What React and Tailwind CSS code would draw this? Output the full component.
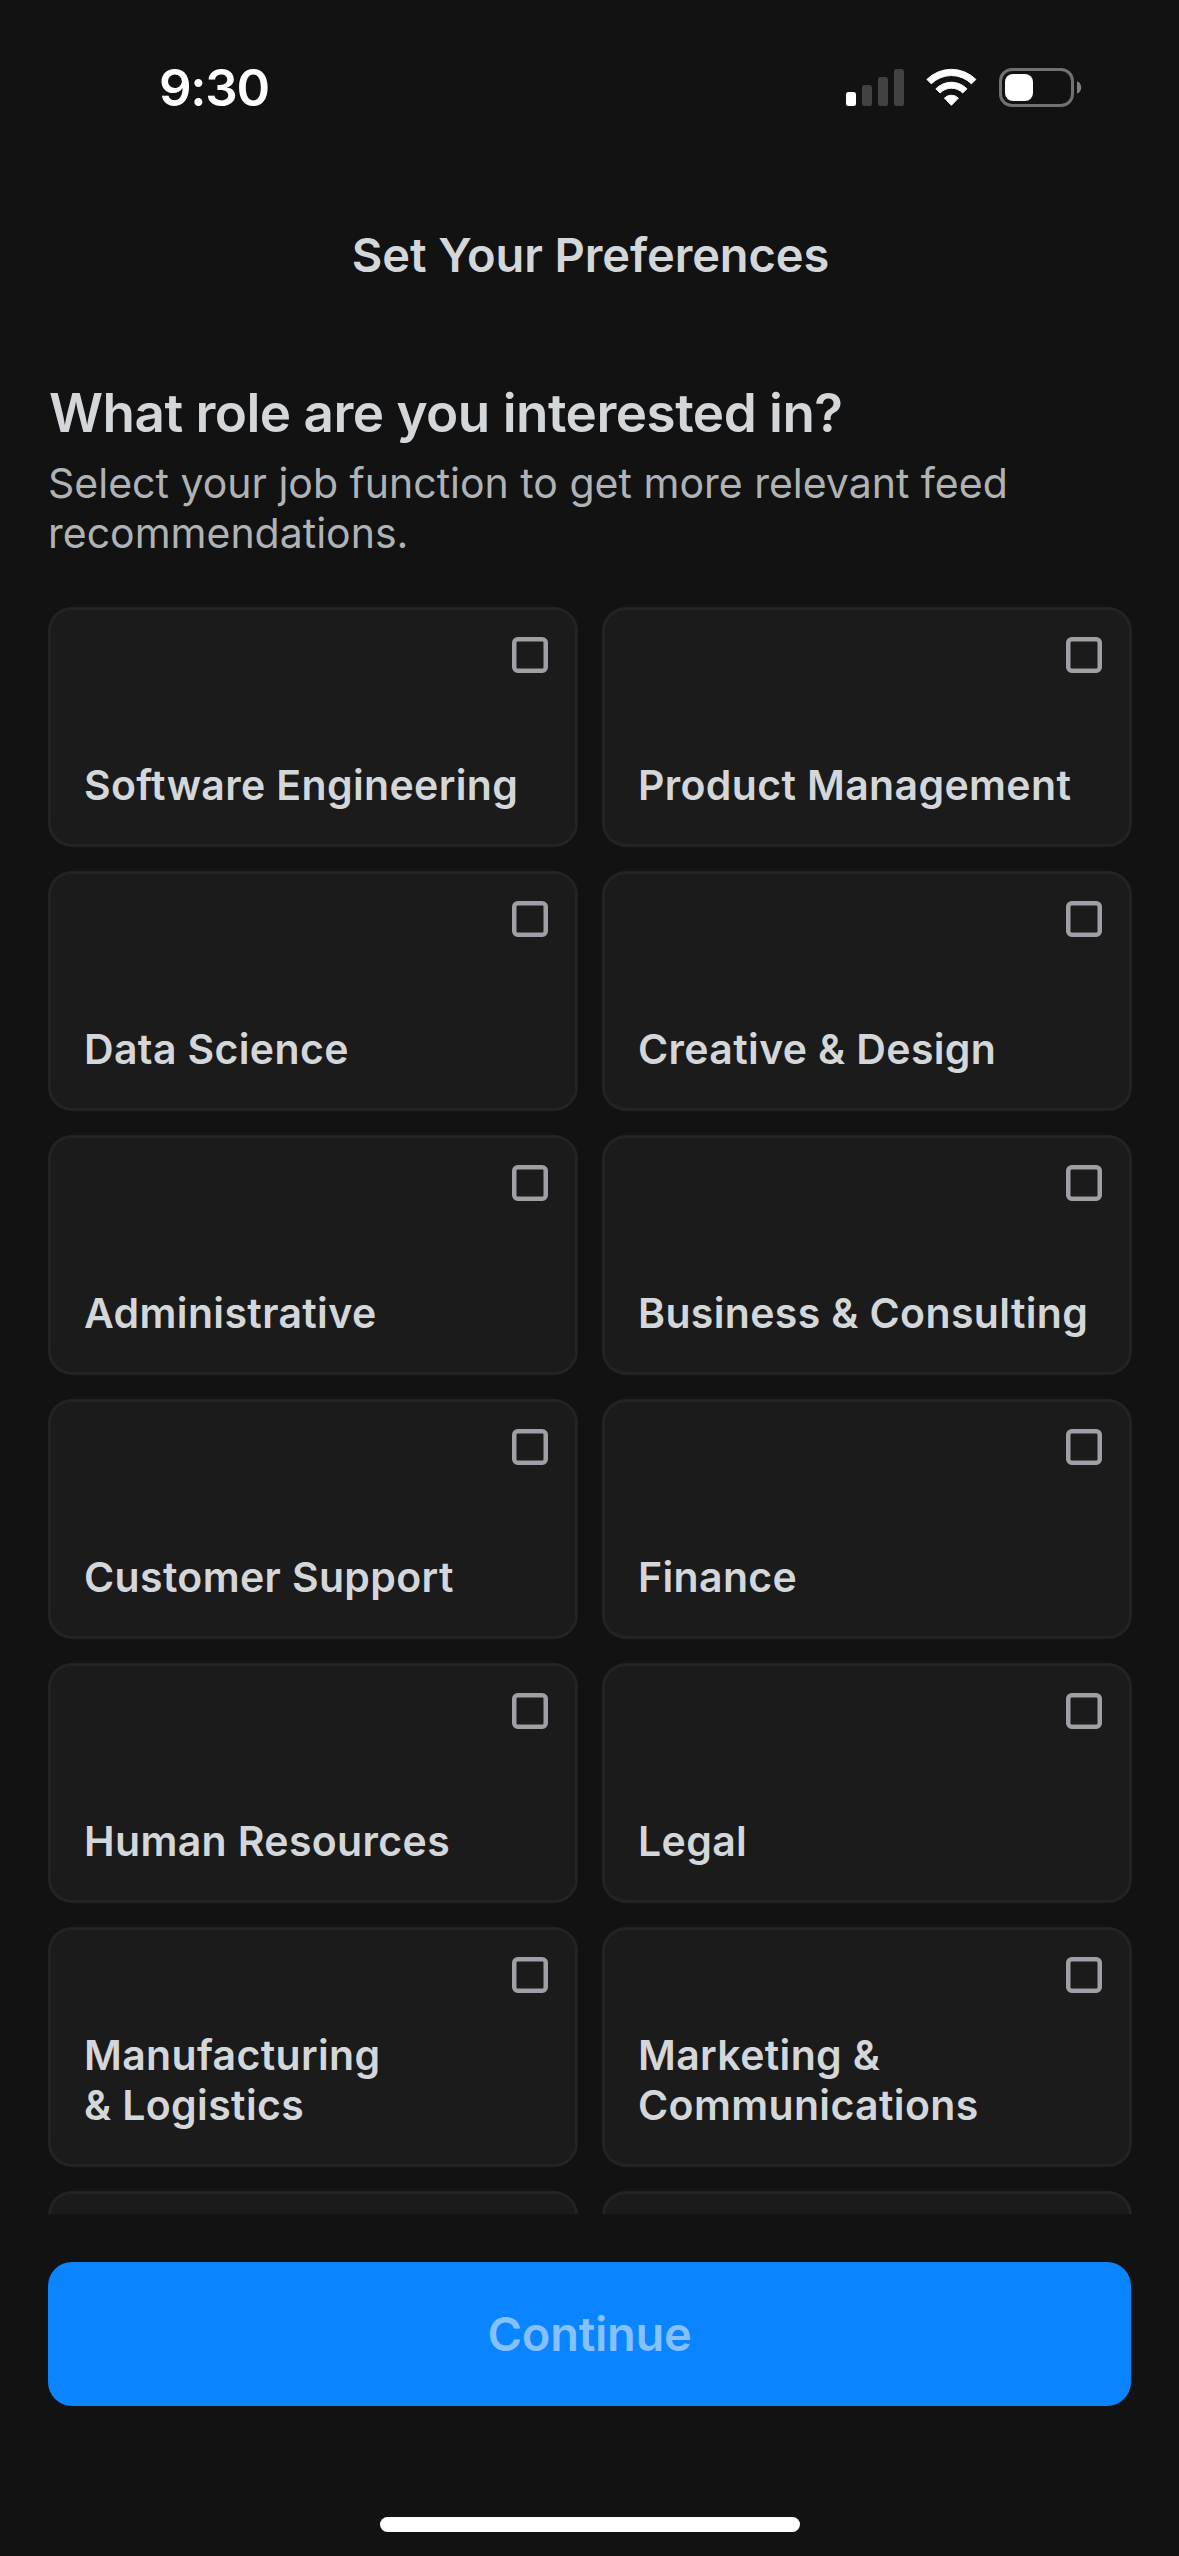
import { useState } from "react";

// Job functions, in the order of the grid
const ROLES = [
  "Software Engineering",
  "Product Management",
  "Data Science",
  "Creative & Design",
  "Administrative",
  "Business & Consulting",
  "Customer Support",
  "Finance",
  "Human Resources",
  "Legal",
  "Manufacturing\n& Logistics",
  "Marketing &\nCommunications",
  "",
  "",
];

const SignalIcon = () => (
  <svg width="58" height="39" viewBox="0 0 58 39">
    <rect x="0" y="24" width="10" height="14" rx="2.5" fill="#fff" />
    <rect x="16" y="17" width="10" height="21" rx="2.5" fill="#424242" />
    <rect x="32" y="9" width="10" height="29" rx="2.5" fill="#424242" />
    <rect x="48" y="1" width="10" height="37" rx="2.5" fill="#424242" />
  </svg>
);

const WifiIcon = () => (
  <svg
    width="51"
    height="39"
    viewBox="0 0 51 39"
    fill="#fff"
    stroke="#fff"
    strokeWidth="1"
    strokeLinejoin="round"
  >
    <path d="M0.9 11.4A34.8 34.8 0 0 1 49.9 11.4L45.5 15.8A28.6 28.6 0 0 0 5.3 15.8Z" />
    <path d="M9.9 20.8A21.6 21.6 0 0 1 40.9 20.8L36.7 25A15.6 15.6 0 0 0 14.1 25Z" />
    <path d="M18.4 30.1A10 10 0 0 1 32.4 30.1L25.4 37.3Z" />
  </svg>
);

const BatteryIcon = () => (
  <svg width="83" height="39" viewBox="0 0 83 39">
    <rect
      x="1.5"
      y="1.5"
      width="72"
      height="36"
      rx="11.5"
      fill="none"
      stroke="#717171"
      strokeWidth="3"
    />
    <rect x="6" y="6" width="28" height="27" rx="8" fill="#fff" />
    <path d="M78 13.2C80.6 14.3 82.2 16.7 82.2 19.4S80.6 24.5 78 25.6Z" fill="#808080" />
  </svg>
);

const Checkbox = ({ checked }) => (
  <svg width="36" height="36" viewBox="0 0 36 36" fill="none">
    <rect
      x="2.25"
      y="2.25"
      width="31.5"
      height="31.5"
      rx="3.5"
      stroke="#9f9fa6"
      strokeWidth="4.5"
    />
    {checked && <path d="M10 18l6 6 11-12" stroke="#0a84ff" strokeWidth="4.5" />}
  </svg>
);

const RoleCard = ({ label, checked, onToggle }) => (
  <button
    onClick={onToggle}
    className="flex h-60 flex-col items-start justify-between rounded-3xl border-3 border-[#232323] bg-[#1b1b1b] pt-[27px] pr-[27px] pb-[34px] pl-[33px] text-left"
  >
    <span className="self-end">
      <Checkbox checked={checked} />
    </span>
    <span className="text-[41px] leading-[50px] font-semibold tracking-[0.36px] whitespace-pre text-[#d4d7da]">
      {label}
    </span>
  </button>
);

const App = () => {
  const [selected, setSelected] = useState([]);

  const toggle = (index) => {
    setSelected((prev) =>
      prev.includes(index) ? prev.filter((i) => i !== index) : [...prev, index]
    );
  };

  return (
    <div className="flex h-[2556px] w-[1179px] flex-col overflow-hidden bg-[#121212] font-['Inter','Liberation_Sans',sans-serif] text-[#d4d7da]">
      {/* Status bar */}
      <div className="flex shrink-0 items-center justify-between pt-[57px] pr-[97px] pl-[159px]">
        <span className="text-[51px] leading-[61px] font-semibold tracking-[-1.3px] text-white">
          9:30
        </span>
        <div className="flex items-center gap-[22px]">
          <SignalIcon />
          <WifiIcon />
          <BatteryIcon />
        </div>
      </div>

      <h1 className="mt-[108px] shrink-0 pl-0.5 text-center text-[47px] leading-[57px] font-semibold tracking-[-0.1px]">
        Set Your Preferences
      </h1>

      {/* Scrollable content, cut off above the footer */}
      <main className="mt-[99px] min-h-0 flex-1 overflow-hidden pl-12">
        <h2 className="pl-px text-[53px] leading-[63px] font-semibold tracking-[-0.52px]">
          What role are you interested in?
        </h2>
        <p className="mt-[13px] w-[1040px] text-[41px] leading-[50px] text-[#afb3b6]">
          Select your job function to get more relevant feed recommendations.
        </p>
        <div className="mt-[49px] grid grid-cols-[530px_530px] gap-6">
          {ROLES.map((label, index) => (
            <RoleCard
              key={index}
              label={label}
              checked={selected.includes(index)}
              onToggle={() => toggle(index)}
            />
          ))}
        </div>
      </main>

      {/* Footer */}
      <footer className="flex shrink-0 flex-col px-12 pt-12 pb-6">
        <button className="h-36 rounded-3xl bg-[#0a84ff] pb-px text-[47px] leading-[57px] font-semibold tracking-[-0.28px] text-[#85c1ff]">
          Continue
        </button>
        <div className="mt-[111px] h-[15px] w-[420px] self-center rounded-full bg-white" />
      </footer>
    </div>
  );
};

export default App;
